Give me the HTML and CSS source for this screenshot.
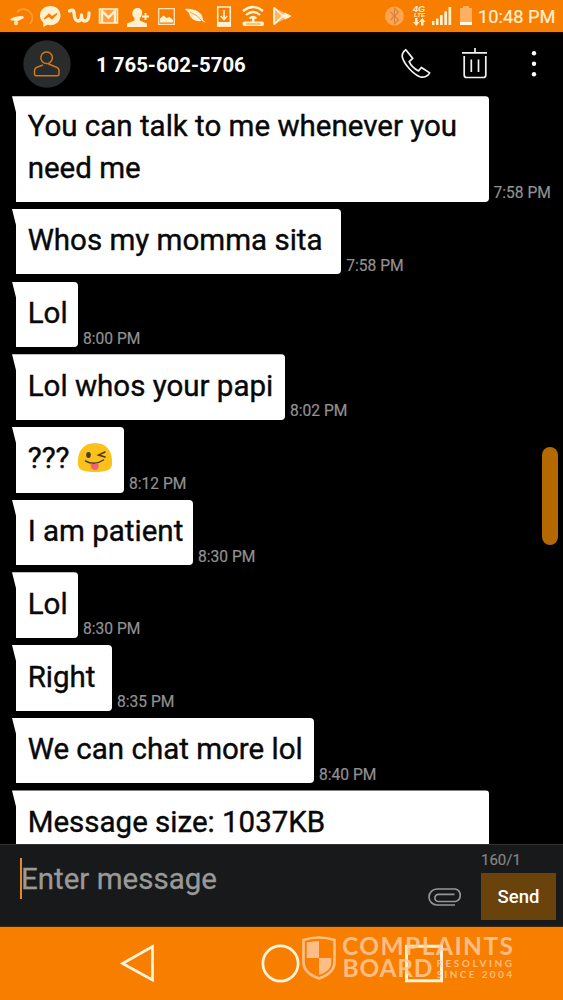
FILE: index.html
```html
<!DOCTYPE html>
<html lang="en">
<head>
<meta charset="utf-8">
<title>Messages</title>
<link rel="stylesheet" href="styles.css">
</head>
<body>
<div class="phone">
  <div class="status">
    <svg class="notifications" width="300" height="32" viewBox="0 0 300 32" fill="#fff0d0">
      <path d="M17 12a8 8 0 1 1 13 12" fill="none" stroke="#ffa040" stroke-width="1.600"/>
      <path d="M10 20q3-4 13-4l1 2-6 3q-4 0-8-1z"/><circle cx="16" cy="23" r="2.200" fill="#ffe49a"/>
      <path d="M50.500 6c-6 0-10.500 4-10.500 9.500 0 3 1.300 5.300 3.300 7V27l4-2.200c7.300 1.700 13.200-2.800 13.200-9.300C60.500 10 56.300 6 50.500 6z"/>
      <path d="M44 19l5-5 3 2.700 5-3.200-5 5.300-3-2.600z" stroke="#f87e00" stroke-width="1.200" fill="#f87e00"/>
      <path d="M69.500 11q4-2.500 4.500 1.500.3 8 4 8.500 3.500 0 3.500-6 0 6 3.500 6 4 0 4-8" fill="none" stroke="#fff0d0" stroke-width="3.300" stroke-linecap="round" stroke-linejoin="round"/>
      <path d="M99.500 9h18v14h-18z" fill="#ff9e3a" stroke="#fff0d0" stroke-width="1.500"/>
      <path d="M102 23V11l6.500 6.500L115 11v12" fill="none" stroke="#fff0d0" stroke-width="2.400"/>
      <path d="M137.500 8c3.500 0 5 2.500 4.500 5.500-.2 2-1 3.500-2.200 4.700v2.300l7.200 3V27h-20v-3.500l7.500-3v-2.300c-1.500-1.500-2.200-3-2.200-4.700 0-3 1.700-5.500 5.200-5.500z"/>
      <path d="M145.500 13v7M142 16.500h7" stroke="#fff0d0" stroke-width="1.900"/>
      <path d="M158.700 8.700h15.600v15.600h-15.600z" fill="none" stroke="#ffe4bc" stroke-width="1.300"/>
      <path d="M160 22.500v-4l3.500-3 3 2.500 3-1 3.500 3v2.500z"/>
      <path d="M185 9c7-1 18 2 18 11l3 3-4-2c-8 1-12-3-13-8z"/><path d="M190 12q8 3 12 9" fill="none" stroke="#f87e00" stroke-width=".7"/>
      <path d="M217.700 7h12.600v19h-12.600z" fill="none" stroke="#fff0d0" stroke-width="1.500"/><path d="M217 22h14v4.500h-14z"/>
      <path d="M224 10v9M220.800 16l3.200 3.500 3.200-3.500" fill="none" stroke="#fff0d0" stroke-width="1.600"/>
      <path d="M243 11q10-8 20 0M246 15q7-6 14 0M249.500 18.500q3.500-3 7 0" fill="none" stroke="#fff0d0" stroke-width="2.300"/>
      <path d="M252 17h2.500v5H252z"/><rect x="242.500" y="21.500" width="21.500" height="4.500" rx="2"/><path d="M246 24h14.500" stroke="#f87e00" stroke-width=".8"/>
      <path d="M274 7.500L291 16l-17 8.500z" fill="#ffb765"/><path d="M274 7.500l12 11.500M274 24.500L286 13M274 7.500v17" stroke="#fff7e5" stroke-width="1.700" fill="none"/><path d="M284 16l3-2.600 4.500 2.600-4.500 2.700z" fill="#fff7e5"/>
    </svg>
    <svg class="system" width="95" height="32" viewBox="380 0 95 32" fill="#fff0d0">
      <circle cx="394.500" cy="16" r="9.500" fill="#ffa450"/>
      <path d="M390.500 12l8 8-4 3.500v-15l4 3.500-8 8" fill="none" stroke="#d98345" stroke-width="1.200"/>
      <text x="413" y="11.500" textLength="12" class="network">4G</text><text x="414" y="17" textLength="11" class="network lte">LTE</text>
      <path d="M415 18h2.500v4h2l-3.200 4-3.300-4h2zM421 25.500h2.500V22h2l-3.200-4-3.300 4h2z"/>
      <path d="M432 21h2.500v4H432zM436 18.500h2.500V25H436zM440 15h2.700v10H440zM444.300 11.500h2.700V25h-2.700zM448.500 7h2.700v18h-2.700z"/>
      <path d="M463 6h6v2h3v14h-12V8h3z" fill="#ffaf62"/><path d="M460 22h12v3h-12z" fill="#fffbe9"/>
    </svg>
    <span class="clock">10:48 PM</span>
  </div>
  <header class="header">
    <svg class="avatar" width="48" height="48" viewBox="0 0 48 48">
      <circle cx="24" cy="24" r="23.700" fill="#292b2c"/>
      <path d="M24.500 23.500a5.800 5.800 0 1 1 2-.7l-1.500.9 8.500 3.600c2 .8 2.500 2 2.500 3.500v3q0 2-2 2H13.500q-2 0-2-2v-3c0-1.800.7-2.800 2.500-3.500l6-2.300" fill="none" stroke="#c97a1b" stroke-width="1.500" stroke-linejoin="round"/>
    </svg>
    <h1 class="contact">1 765-602-5706</h1>
    <svg width="30" height="32" viewBox="401 48 30 32"><path d="M405.800 49.700c-2.600 2-4.200 4.900-3.300 8 2.100 6.800 10.500 16.300 17.300 19 4.200 1.500 8.200-.6 9.900-3.800L421.400 67.500l-2.900 3.400c-4.300-2.200-7.600-5.300-9.300-9.300l3.500-3.200z" fill="none" stroke="#f2f2f2" stroke-width="1.700" stroke-linejoin="round"/></svg>
    <svg width="28" height="34" viewBox="461 46 28 34"><path d="M475 47v5M462 51.800h25M464.200 55v19q0 2.500 2.500 2.500h16.600q2.500 0 2.500-2.500V55M471.300 58.500V71M478.500 58.500V71" fill="none" stroke="#f2f2f2" stroke-width="1.700"/></svg>
    <svg width="8" height="30" viewBox="530 49 8 30" fill="#fff"><circle cx="534" cy="53.200" r="2.200"/><circle cx="534" cy="63.800" r="2.200"/><circle cx="534" cy="74.300" r="2.200"/></svg>
  </header>
  <main class="thread">
    <div class="row"><p class="bubble full two-line">You can talk to me whenever you<br>need me</p><time>7:58 PM</time></div>
    <div class="row"><p class="bubble momma">Whos my momma sita</p><time>7:58 PM</time></div>
    <div class="row"><p class="bubble lol">Lol</p><time>8:00 PM</time></div>
    <div class="row"><p class="bubble papi">Lol whos your papi</p><time>8:02 PM</time></div>
    <div class="row"><p class="bubble question">???<svg class="emoji" width="36" height="32" viewBox="0 0 36 32"><path d="M1 22C0 10 6 1 18 1s18 9 17 21c0 6-6 8-17 8S1 28 1 22z" fill="#fcc21b"/><ellipse cx="11.500" cy="13" rx="2.300" ry="3" fill="#443b32"/><path d="M28 10l-6.500 3 6.500 2M8.500 19q9 5 18-1" fill="none" stroke="#493a25" stroke-width="1.500" stroke-linecap="round"/><path d="M13.500 21.500q4 1 8-.5v3.500q-.5 3.500-3.500 3.500-3 0-4-3z" fill="#ed6375"/></svg></p><time>8:12 PM</time></div>
    <div class="row"><p class="bubble patient">I am patient</p><time>8:30 PM</time></div>
    <div class="row"><p class="bubble lol">Lol</p><time>8:30 PM</time></div>
    <div class="row"><p class="bubble right">Right</p><time>8:35 PM</time></div>
    <div class="row"><p class="bubble chat">We can chat more lol</p><time>8:40 PM</time></div>
    <div class="row"><p class="bubble full">Message size: 1037KB</p></div>
    <span class="scrollbar"></span>
  </main>
  <section class="composer">
    <div class="field">Enter message</div>
    <svg class="clip" width="36" height="20" viewBox="428 887 36 20"><path d="M455 905H437a8 8 0 0 1 0-16h18.500a6.500 6.500 0 0 1 0 12.500H438.500a3.600 3.600 0 0 1 0-7.200h16" fill="none" stroke="#969696" stroke-width="1.700"/></svg>
    <div class="actions"><span class="count">160/1</span><button class="send">Send</button></div>
  </section>
  <nav class="nav">
    <svg width="36" height="40" viewBox="119 943 36 40"><path d="M152.500 946.500v33.500l-30-16.500z" fill="none" stroke="#fff5dc" stroke-width="2.700"/></svg>
    <svg width="40" height="40" viewBox="260 943 40 40"><circle cx="280.500" cy="963.500" r="17.600" fill="none" stroke="#fff5dc" stroke-width="2.700"/></svg>
    <svg width="40" height="40" viewBox="404 943 40 40"><path d="M406.500 946.200h35v34.500h-35z" fill="none" stroke="#fff5dc" stroke-width="3"/></svg>
    <svg class="watermark" width="216" height="50" viewBox="300 932 216 50" fill="#ffc99c">
      <path d="M303.500 940q15.500-5 31 0v22q0 11-15.500 16.500Q303.500 973 303.500 962z" fill="none" stroke="#ffc99c" stroke-width="2.700"/>
      <path d="M319 941v17h-12.300v-15.500q6-1.500 12.300-1.500zM319 958h12.300v5q0 8-12.300 12z"/>
      <text x="342" y="955" textLength="171" class="brand">COMPLAINTS</text>
      <text x="342.500" y="977" textLength="90" class="brand">BOARD</text>
      <text x="436.500" y="966.500" textLength="75.500" class="tagline">RESOLVING</text>
      <text x="436.500" y="977.500" textLength="75.500" class="tagline">SINCE 2004</text>
    </svg>
  </nav>
</div>
</body>
</html>
```
FILE: styles.css
```css
* { box-sizing: border-box; }
body { margin: 0; background: #000; font-family: Roboto, sans-serif; }
svg { display: block; flex: none; }
.phone { width: 563px; height: 1000px; display: flex; flex-direction: column; overflow: hidden; }
.status { height: 32px; flex: none; display: flex; background: #f87e00; }
.system { margin-left: 80px; }
.clock { margin-left: 3px; padding-top: 1px; line-height: 32px; font-size: 18.300px; color: #fff0d4; white-space: nowrap; -webkit-text-stroke: .200px #fff0d4; }
.network { font: italic bold 9px "Liberation Sans", sans-serif; }
.lte { font-size: 6px; }
.header { height: 64px; flex: none; display: flex; align-items: center; padding: 0 25px 2px 23px; border-top: 1px solid #260000; }
.contact { margin: 2px auto 0 25px; color: #fff; font-size: 20.400px; font-weight: 700; white-space: nowrap; }
.header svg + svg { margin-left: 30px; }
.header svg:last-child { margin-left: 41px; }
.thread { position: relative; height: 748px; flex: none; overflow: hidden; display: flex; flex-direction: column; gap: 7.100px; padding: .200px 0 0 12px; }
.row { display: flex; align-items: flex-end; flex: none; }
.bubble { margin: 0; height: 65.600px; padding: 10.500px 0 0 15.700px; background: #fff; color: #080808; font-size: 29.500px; line-height: 42px; white-space: nowrap; -webkit-text-stroke: .400px #080808; clip-path: path("M0 0H600V300H4V16Z"); border-radius: 0 4px 4px 4px; }
.two-line { height: 105.600px; padding-top: 8.500px; }
.full { width: 476.500px; }
.momma { width: 329.300px; }
.lol { width: 66px; }
.papi { width: 273px; }
.question { width: 112px; display: flex; }
.patient { width: 181px; }
.right { width: 100px; }
.chat { width: 302px; }
.emoji { margin: 5px 0 0 7.500px; }
time { margin: 0 0 -1.500px 5px; color: #929292; font-size: 15.600px; line-height: 19px; white-space: nowrap; -webkit-text-stroke: .200px #929292; }
.scrollbar { position: absolute; right: 5px; top: 351px; width: 16px; height: 98px; border-radius: 8px; background: #b36800; }
.composer { height: 83px; flex: none; display: flex; border-top: 1px solid #303233; border-bottom: 1px solid #45280c; background: #18191a; }
.field { width: 408px; height: 41px; margin: 13px 0 0 20px; border-left: 2px solid #e58b1d; color: #999; font-size: 29.500px; line-height: 43px; text-indent: -1px; -webkit-text-stroke: .300px #999; }
.clip { margin-top: 42px; }
.actions { width: 75px; margin-left: 17px; padding-top: 5px; }
.count { display: block; height: 23px; color: #858585; font-size: 15px; line-height: 21px; -webkit-text-stroke: .200px #858585; }
.send { display: block; width: 75px; height: 47px; border: 0; padding: 0; background: #69420c; color: #fff; font: 500 18.500px Roboto, sans-serif; }
.nav { position: relative; height: 73px; flex: none; display: flex; padding: 16px 0 0 119px; background: #f87e00; }
.nav svg + svg { margin-left: 105px; }
.nav svg:nth-child(3) { margin-left: 104px; }
.nav .watermark { position: absolute; left: 300px; top: 5px; margin: 0; opacity: .850; }
.brand { font: bold 24.500px Lato, sans-serif; }
.tagline { font: bold 10px Lato, sans-serif; }
```
